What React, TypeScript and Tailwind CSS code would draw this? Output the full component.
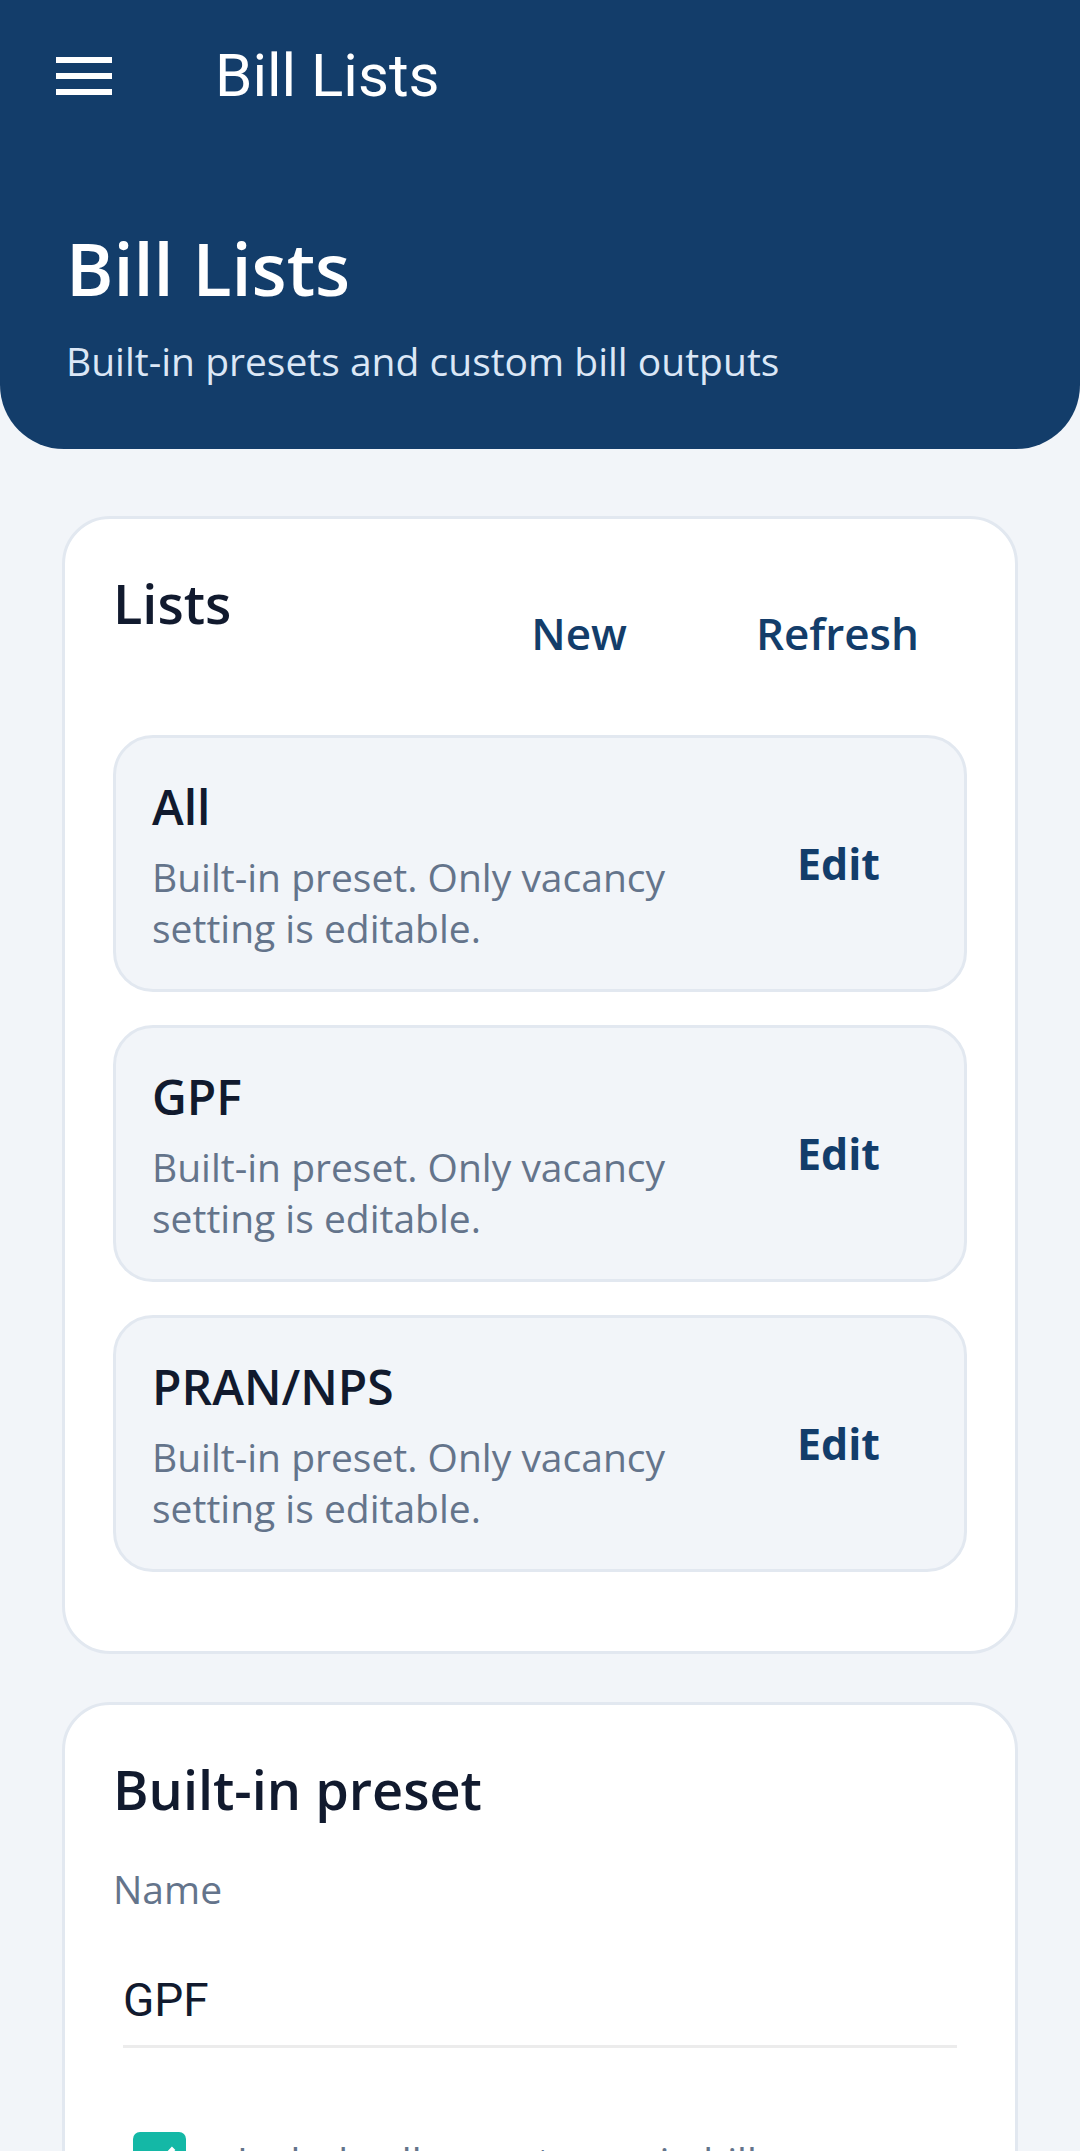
import React from 'react';

interface ListItem {
  id: string;
  name: string;
  description: string;
}

const lists: ListItem[] = [
  { id: 'all', name: 'All', description: 'Built-in preset. Only vacancy setting is editable.' },
  { id: 'gpf', name: 'GPF', description: 'Built-in preset. Only vacancy setting is editable.' },
  { id: 'nps', name: 'PRAN/NPS', description: 'Built-in preset. Only vacancy setting is editable.' },
];

const openSans = { fontFamily: '"Open Sans", "Noto Sans", sans-serif' };
const roboto = { fontFamily: 'Roboto, "Liberation Sans", sans-serif' };

const App: React.FC = () => {
  return (
    <div className="h-[2151px] w-[1080px] overflow-hidden bg-[#f2f5f9]" style={openSans}>
      {/* header */}
      <div className="bg-[#133d6a] rounded-b-[64px]">
        <div className="h-[152px] flex items-center pl-[56px]">
          <button className="flex flex-col gap-[10px]">
            <span className="block w-[56px] h-[6px] bg-white" />
            <span className="block w-[56px] h-[6px] bg-white" />
            <span className="block w-[56px] h-[6px] bg-white" />
          </button>
          <h1 className="ml-[103px] text-[60px] leading-[70px] font-normal text-white" style={roboto}>
            Bill Lists
          </h1>
        </div>
        <div className="px-[66px] pt-[67px] pb-[62px]">
          <h2 className="text-[72px] leading-[98px] font-semibold text-white">Bill Lists</h2>
          <p className="mt-[17px] text-[39px] leading-[53px] text-[#dbe7f6]">
            Built-in presets and custom bill outputs
          </p>
        </div>
      </div>

      {/* lists card */}
      <div className="mx-[62px] mt-[67px] rounded-[48px] border-[3px] border-[#e2e8f0] bg-white px-[48px] pt-[48px] pb-[79px]">
        <div className="flex items-start justify-between">
          <h3 className="text-[54px] leading-[73px] font-semibold text-[#111a2e]">Lists</h3>
          <div className="flex gap-[33px]">
            <button className="h-[132px] px-[48px] flex items-center text-[44px] font-semibold text-[#133d6a]">
              New
            </button>
            <button className="h-[132px] px-[48px] flex items-center text-[44px] font-semibold text-[#133d6a]">
              Refresh
            </button>
          </div>
        </div>
        <div className="mt-[36px] flex flex-col gap-[33px]">
          {lists.map((item) => (
            <div
              key={item.id}
              className="flex items-center justify-between rounded-[40px] border-[3px] border-[#e2e8f0] bg-[#f2f5f9] p-[36px]"
            >
              <div className="flex-1 min-w-0">
                <p className="text-[48px] leading-[65px] font-semibold text-[#111a2e]">{item.name}</p>
                <p className="mt-[12px] text-[39px] leading-[51px] text-[#64748b]">{item.description}</p>
              </div>
              <button className="shrink-0 px-[48px] text-[43px] leading-[58px] font-bold text-[#133d6a]">
                Edit
              </button>
            </div>
          ))}
        </div>
      </div>

      {/* editor card */}
      <div className="mx-[62px] mt-[48px] rounded-[48px] border-[3px] border-[#e2e8f0] bg-white px-[48px] pt-[48px] pb-[48px]">
        <h3 className="text-[54px] leading-[73px] font-semibold text-[#111a2e]">Built-in preset</h3>
        <p className="mt-[36px] text-[39px] leading-[53px] text-[#64748b]">Name</p>
        <div className="mx-[10px] mt-[58px] border-b-[3px] border-[#ececec] pb-[18px]">
          <p className="text-[46px] leading-[54px] text-[#111a2e]" style={roboto}>
            GPF
          </p>
        </div>
        <label className="mt-[84px] flex items-start">
          <span className="ml-[20px] flex h-[53px] w-[53px] shrink-0 items-center justify-center rounded-[7px] bg-[#14b8a6]">
            <svg width="36" height="36" viewBox="0 0 24 24" fill="none">
              <path d="M4 12.5l5 5L20 6" stroke="white" strokeWidth="3.2" strokeLinecap="square" />
            </svg>
          </span>
          <span className="ml-[51px] mt-[2px] text-[39px] leading-[53px] text-[#64748b]">
            Include all vacant rows in bill
          </span>
        </label>
        <div className="mt-[60px] h-[200px]" />
      </div>
    </div>
  );
};

export default App;
